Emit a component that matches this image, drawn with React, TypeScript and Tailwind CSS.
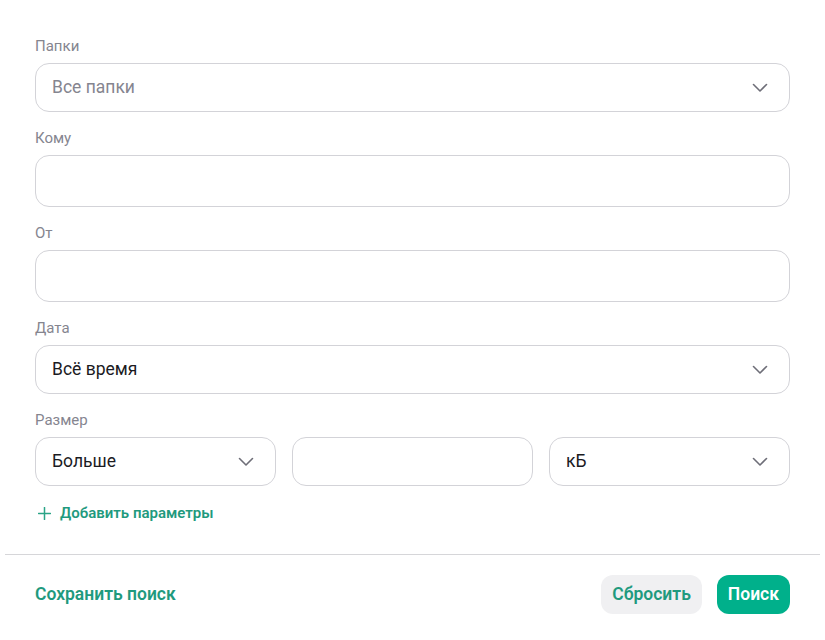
import React from "react";

const Chevron = () => (
  <svg width="16" height="10" viewBox="0 0 16 10" fill="none" className="shrink-0">
    <path d="M1.5 1.5L8 8L14.5 1.5" stroke="#6e6e78" strokeWidth="1.6" strokeLinecap="round" strokeLinejoin="round" />
  </svg>
);

const Label = ({ children }: { children: React.ReactNode }) => (
  <div className="text-[15px] h-5 leading-[22px] text-[#85858f] mb-2">{children}</div>
);

const Select = ({ value, placeholder }: { value: string; placeholder?: boolean }) => (
  <div className="h-[49px] flex items-center justify-between pl-4 pr-[21px] border border-[#d3d3d8] rounded-[14px] bg-white">
    <span className={`text-[17.5px] ${placeholder ? "text-[#85858f]" : "text-[#1b1b1f]"}`}>{value}</span>
    <Chevron />
  </div>
);

const Input = () => <div className="h-[52px] border border-[#d3d3d8] rounded-[14px] bg-white" />;

export default function App() {
  return (
    <div className="w-[825px] h-[640px] bg-white px-[5px] pt-[35px]" style={{ fontFamily: "Roboto, 'Noto Sans', sans-serif" }}>
      <div className="px-[30px] flex flex-col gap-[15px]">
        <div>
          <Label>Папки</Label>
          <Select value="Все папки" placeholder />
        </div>
        <div>
          <Label>Кому</Label>
          <Input />
        </div>
        <div>
          <Label>От</Label>
          <Input />
        </div>
        <div>
          <Label>Дата</Label>
          <Select value="Всё время" />
        </div>
        <div>
          <Label>Размер</Label>
          <div className="grid grid-cols-3 gap-4">
            <Select value="Больше" />
            <div className="h-[49px] border border-[#d3d3d8] rounded-[14px] bg-white" />
            <Select value="кБ" />
          </div>
        </div>
      </div>
      <div className="pl-[33px] mt-[17px] h-5 flex items-center gap-[9px] text-[#1f9a7e] font-semibold text-[15px]">
        <svg width="13" height="13" viewBox="0 0 13 13" fill="none">
          <path d="M6.5 0.5V12.5M0.5 6.5H12.5" stroke="#2aa487" strokeWidth="1.5" strokeLinecap="round" />
        </svg>
        <span>Добавить параметры</span>
      </div>
      <div className="mt-[31px] h-px bg-[#d6d6d9]" />
      <div className="px-[30px] mt-5 flex items-center justify-between">
        <span className="text-[17.5px] font-semibold text-[#1f9a7e]">Сохранить поиск</span>
        <div className="flex items-center gap-[15px]">
          <button className="h-[39px] px-[11px] rounded-[12px] bg-[#f0f0f2] text-[17.5px] font-semibold text-[#1f9a7e]">Сбросить</button>
          <button className="h-[39px] px-[11px] rounded-[12px] bg-[#00b08b] text-[17.5px] font-semibold text-white">Поиск</button>
        </div>
      </div>
    </div>
  );
}
